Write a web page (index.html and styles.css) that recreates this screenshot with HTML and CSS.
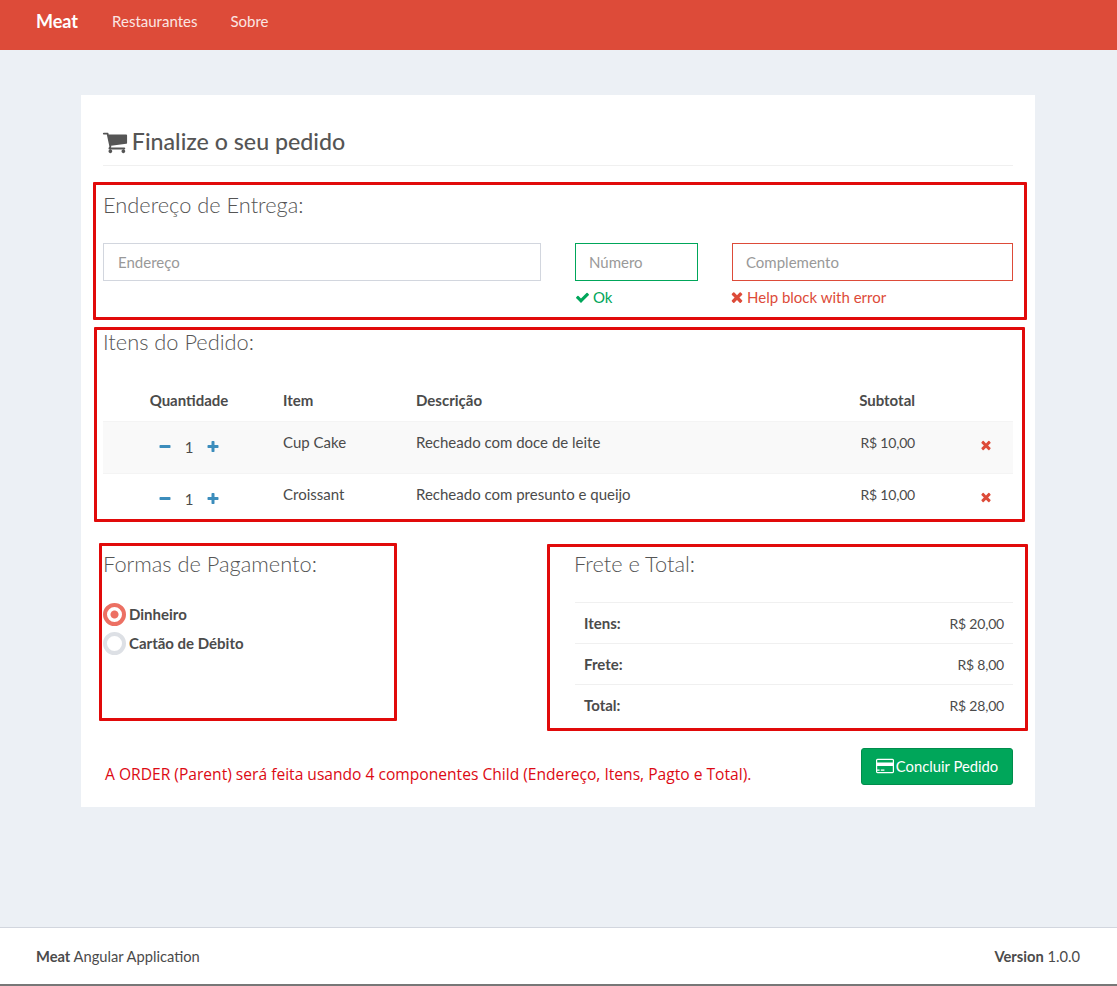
FILE: index.html
```html
<!DOCTYPE html>
<html lang="pt-BR">
<head>
  <meta charset="UTF-8">
  <meta name="viewport" content="width=device-width, initial-scale=1.0">
  <title>Meat</title>
  <link rel="stylesheet" href="styles.css">
</head>
<body>
  <svg class="icon-defs" width="0" height="0" aria-hidden="true">
    <symbol id="i-cart" viewBox="0 0 1792 1792"><path d="M704 1536q0 52-38 90t-90 38-90-38-38-90 38-90 90-38 90 38 38 90zm896 0q0 52-38 90t-90 38-90-38-38-90 38-90 90-38 90 38 38 90zm128-1088v512q0 24-16.5 42.5t-40.5 21.5l-1044 122q13 60 13 70 0 16-24 64h920q26 0 45 19t19 45-19 45-45 19h-1024q-26 0-45-19t-19-45q0-11 8-31.5t16-36 21.5-40 15.5-29.5l-177-823h-204q-26 0-45-19t-19-45 19-45 45-19h256q16 0 28.5 6.5t19.5 15.5 13 24.5 8 26 5.5 29.5 4.5 26h1201q26 0 45 19t19 45z"/></symbol>
    <symbol id="i-check" viewBox="0 0 1792 1792"><path d="M1671 566q0 40-28 68l-724 724-136 136q-28 28-68 28t-68-28l-136-136-362-362q-28-28-28-68t28-68l136-136q28-28 68-28t68 28l294 295 656-657q28-28 68-28t68 28l136 136q28 28 28 68z"/></symbol>
    <symbol id="i-times" viewBox="0 0 1792 1792"><path d="M1490 1322q0 40-28 68l-136 136q-28 28-68 28t-68-28l-294-294-294 294q-28 28-68 28t-68-28l-136-136q-28-28-28-68t28-68l294-294-294-294q-28-28-28-68t28-68l136-136q28-28 68-28t68 28l294 294 294-294q28-28 68-28t68 28l136 136q28 28 28 68t-28 68l-294 294 294 294q28 28 28 68z"/></symbol>
    <symbol id="i-plus" viewBox="0 0 1792 1792"><path d="M1600 736v192q0 40-28 68t-68 28h-416v416q0 40-28 68t-68 28h-192q-40 0-68-28t-28-68v-416h-416q-40 0-68-28t-28-68v-192q0-40 28-68t68-28h416v-416q0-40 28-68t68-28h192q40 0 68 28t28 68v416h416q40 0 68 28t28 68z"/></symbol>
    <symbol id="i-minus" viewBox="0 0 1792 1792"><path d="M1600 736v192q0 40-28 68t-68 28h-1216q-40 0-68-28t-28-68v-192q0-40 28-68t68-28h1216q40 0 68 28t28 68z"/></symbol>
    <symbol id="i-card" viewBox="0 0 1920 1792"><path d="M1760 128q66 0 113 47t47 113v1216q0 66-47 113t-113 47h-1600q-66 0-113-47t-47-113v-1216q0-66 47-113t113-47h1600zm-1600 128q-13 0-22.5 9.5t-9.5 22.5v224h1664v-224q0-13-9.5-22.5t-22.5-9.5h-1600zm1600 1280q13 0 22.5-9.5t9.5-22.5v-608h-1664v608q0 13 9.5 22.5t22.5 9.5h1600zm-1632-128v-128h256v128h-256zm384 0v-128h384v128h-384z"/></symbol>
  </svg>

  <header class="navbar">
    <a class="brand" href="#">Meat</a>
    <a class="nav-link" href="#">Restaurantes</a>
    <a class="nav-link" href="#">Sobre</a>
  </header>

  <main class="content">
    <div class="order-box">
      <h1 class="page-title"><svg class="icon-cart"><use href="#i-cart"/></svg> Finalize o seu pedido</h1>

      <section class="block block-address">
        <h2 class="block-title">Endereço de Entrega:</h2>
        <div class="address-row">
          <div class="field field-street">
            <input class="input" type="text" placeholder="Endereço">
          </div>
          <div class="field field-number">
            <input class="input input-ok" type="text" placeholder="Número">
            <span class="help help-ok"><svg class="icon-check"><use href="#i-check"/></svg>Ok</span>
          </div>
          <div class="field field-extra">
            <input class="input input-error" type="text" placeholder="Complemento">
            <span class="help help-error"><svg class="icon-times"><use href="#i-times"/></svg>Help block with error</span>
          </div>
        </div>
      </section>

      <section class="block block-items">
        <h2 class="block-title">Itens do Pedido:</h2>
        <table class="items">
          <thead>
            <tr>
              <th class="col-qty">Quantidade</th>
              <th class="col-item">Item</th>
              <th class="col-desc">Descrição</th>
              <th class="col-sub">Subtotal</th>
              <th class="col-del"></th>
            </tr>
          </thead>
          <tbody>
            <tr>
              <td class="col-qty"><span class="qty"><svg class="icon-qty"><use href="#i-minus"/></svg><span class="qty-num">1</span><svg class="icon-qty"><use href="#i-plus"/></svg></span></td>
              <td>Cup Cake</td>
              <td>Recheado com doce de leite</td>
              <td class="col-sub money">R$ 10,00</td>
              <td class="col-del"><svg class="icon-del"><use href="#i-times"/></svg></td>
            </tr>
            <tr>
              <td class="col-qty"><span class="qty"><svg class="icon-qty"><use href="#i-minus"/></svg><span class="qty-num">1</span><svg class="icon-qty"><use href="#i-plus"/></svg></span></td>
              <td>Croissant</td>
              <td>Recheado com presunto e queijo</td>
              <td class="col-sub money">R$ 10,00</td>
              <td class="col-del"><svg class="icon-del"><use href="#i-times"/></svg></td>
            </tr>
          </tbody>
        </table>
      </section>

      <div class="bottom-row">
        <section class="block block-payment">
          <h2 class="block-title">Formas de Pagamento:</h2>
          <div class="radio-option"><span class="radio radio-on"></span>Dinheiro</div>
          <div class="radio-option"><span class="radio"></span>Cartão de Débito</div>
        </section>

        <section class="block block-total">
          <h2 class="block-title">Frete e Total:</h2>
          <table class="totals">
            <tr><th>Itens:</th><td class="money">R$ 20,00</td></tr>
            <tr><th>Frete:</th><td class="money">R$ 8,00</td></tr>
            <tr><th>Total:</th><td class="money">R$ 28,00</td></tr>
          </table>
        </section>
      </div>

      <div class="order-footer">
        <p class="note">A ORDER (Parent) será feita usando 4 componentes Child (Endereço, Itens, Pagto e Total).</p>
        <a class="btn-finish" href="#"><svg class="icon-card"><use href="#i-card"/></svg>Concluir Pedido</a>
      </div>
    </div>
  </main>

  <footer class="page-footer">
    <span><strong>Meat</strong> Angular Application</span>
    <span><strong>Version</strong> 1.0.0</span>
  </footer>
</body>
</html>
```

FILE: styles.css
```css
*,
*::after {
  box-sizing: border-box;
}

body {
  margin: 0;
  height: 986px;
  display: flex;
  flex-direction: column;
  font-family: "Lato", "Noto Sans", sans-serif;
  font-size: 15px;
  color: #4b4b4b;
  background-color: #ecf0f5;
}

.icon-defs {
  position: absolute;
}

svg {
  fill: currentColor;
}

.money {
  font-size: 14px;
  letter-spacing: -0.2px;
}

/* navbar */
.navbar {
  height: 50px;
  flex: none;
  display: flex;
  align-items: center;
  padding: 0 0 8px 36px;
  background-color: #dd4b39;
  color: #fff;
}

.brand {
  color: #fff;
  font-size: 18px;
  font-weight: 700;
  text-decoration: none;
  margin-right: 34px;
}

.nav-link {
  color: #fbe6e3;
  text-decoration: none;
  margin-right: 33px;
}

/* main box */
.content {
  flex: 1;
  padding: 45px 82px 0 81px;
}

.order-box {
  height: 712px;
  padding: 24px 22px 0;
  background-color: #fff;
}

.page-title {
  height: 47px;
  margin: 0;
  font-size: 23.2px;
  font-weight: 500;
  line-height: 44px;
  color: #555;
  border-bottom: 1px solid #f0f0f0;
}

.icon-cart {
  width: 26px;
  height: 26px;
  margin: 0 -2px 0 -1px;
  vertical-align: -5px;
}

.block {
  position: relative;
}

/* the red boxes drawn on top of each section */
.block::after {
  content: "";
  position: absolute;
  border: 3px solid #e10a0a;
  border-radius: 1px;
  pointer-events: none;
}

.block-title {
  margin: 0;
  font-size: 21.8px;
  font-weight: 300;
  line-height: 30px;
  color: #555;
}

/* endereco */
.block-address {
  height: 155px;
  padding-top: 24px;
}

.block-address::after {
  top: 16px;
  left: -10px;
  right: -14px;
  height: 138px;
}

.address-row {
  display: flex;
  margin-top: 23px;
}

.field {
  display: flex;
  flex-direction: column;
}

.field-street {
  width: 438px;
  margin-right: 34px;
}

.field-number {
  width: 123px;
  margin-right: 34px;
}

.field-extra {
  width: 281px;
}

.input {
  width: 100%;
  height: 38px;
  padding: 0 14px;
  border: 1px solid #d2d6de;
  font: inherit;
  outline: none;
}

.input::placeholder {
  color: #999;
  opacity: 1;
}

.input-ok {
  padding: 0 13px;
  border-color: #00a65a;
}

.input-error {
  padding: 0 13px;
  border-color: #dd4b39;
}

.help {
  display: flex;
  align-items: center;
  margin-top: 6px;
  line-height: 20px;
}

.help-ok {
  color: #00a65a;
}

.help-error {
  color: #dd4b39;
}

.icon-check {
  width: 15px;
  height: 15px;
  margin-right: 3px;
}

.icon-times {
  width: 16px;
  height: 16px;
  margin: 0 2px 0 -3px;
}

/* itens */
.block-items {
  height: 200px;
  padding-top: 6px;
}

.block-items::after {
  top: 6px;
  left: -9px;
  right: -12px;
  height: 195px;
}

.items {
  width: 100%;
  margin-top: 23px;
  border-collapse: collapse;
  table-layout: fixed;
}

.items th {
  height: 41px;
  padding: 0 8px;
  text-align: left;
  font-weight: 700;
}

.items td {
  height: 52px;
  padding: 0 8px 10px;
}

.items tbody tr:nth-child(odd) {
  background-color: #f9f9f9;
}

.items tbody tr {
  border-top: 1px solid #f4f4f4;
}

.items th.col-qty,
.items td.col-qty {
  width: 172px;
  padding-left: 0;
  padding-right: 0;
  text-align: center;
}

.col-item {
  width: 133px;
}

.col-desc {
  width: 385px;
}

.items .col-sub {
  width: 132px;
  padding-right: 10px;
  text-align: right;
}

.col-del {
  width: 88px;
}

.items td.col-del {
  padding: 0 20px 4px 0;
}

.items td.col-qty {
  padding-bottom: 0;
}

.qty {
  display: flex;
  align-items: center;
  justify-content: center;
  color: #3c8dbc;
}

.qty-num {
  width: 34px;
  color: #4b4b4b;
  text-align: center;
}

.icon-qty {
  width: 14px;
  height: 14px;
}

.icon-del {
  display: block;
  width: 14px;
  height: 14px;
  margin-left: auto;
  color: #dd4b39;
}

/* pagamento e total */
.bottom-row {
  display: flex;
  height: 204px;
  margin-top: 20px;
}

.block-payment {
  width: 472px;
  padding-top: 8px;
}

.block-payment::after {
  top: 2px;
  left: -4px;
  width: 298px;
  height: 178px;
}

.radio-option {
  display: flex;
  align-items: center;
  height: 29px;
  padding-bottom: 2px;
  font-weight: 700;
}

.block-payment .block-title {
  margin-bottom: 21px;
}

.radio {
  width: 23px;
  height: 23px;
  margin: 0 3px -2px 0;
  border: 4px solid #dde0e5;
  border-radius: 50%;
  background-color: #fff;
}

.radio-on {
  border-color: #ec7063;
  background: radial-gradient(circle, #ec7063 0 3.5px, #fff 4.5px);
}

.block-total {
  flex: 1;
  padding-top: 8px;
}

.block-total::after {
  top: 3px;
  left: -28px;
  right: -15px;
  height: 187px;
}

.block-total .block-title {
  margin-left: -1px;
}

.totals {
  width: 100%;
  margin-top: 23px;
  border-collapse: collapse;
}

.totals tr {
  border-top: 1px solid #f0f0f0;
}

.totals th,
.totals td {
  height: 41px;
  padding: 0 9px;
}

.totals th {
  text-align: left;
  font-weight: 700;
}

.totals td {
  text-align: right;
}

/* rodape do pedido */
.order-footer {
  display: flex;
  justify-content: space-between;
  align-items: flex-start;
  margin-top: 3px;
}

.note {
  margin: 15px 0 0 2px;
  font-family: "Open Sans", sans-serif;
  font-size: 15.6px;
  color: #dc0a14;
}

.btn-finish {
  display: flex;
  align-items: center;
  justify-content: center;
  gap: 2px;
  width: 152px;
  height: 37px;
  padding-bottom: 1px;
  background-color: #00a65a;
  border: 1px solid #008d4c;
  border-radius: 3px;
  color: #fff;
  font-size: 14.8px;
  text-decoration: none;
}

.icon-card {
  width: 18px;
  height: 18px;
}

/* rodape */
.page-footer {
  height: 59px;
  flex: none;
  display: flex;
  justify-content: space-between;
  align-items: center;
  padding: 0 37px 0 36px;
  background-color: #fff;
  border-top: 1px solid #d2d6de;
  border-bottom: 2px solid #777;
  font-size: 14.7px;
}
```
